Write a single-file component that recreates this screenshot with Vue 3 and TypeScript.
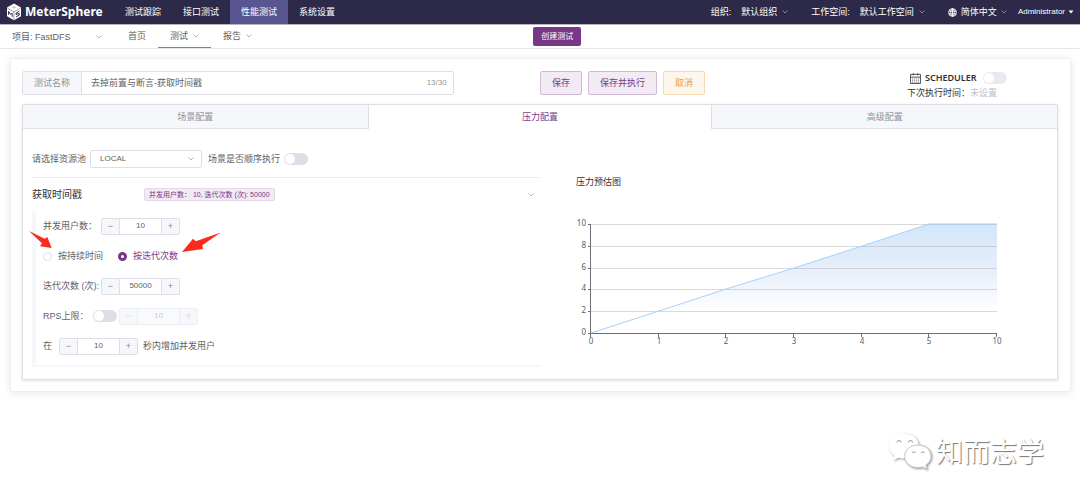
<script setup lang="ts">
import { computed, ref } from 'vue'

const topMenu = ['测试跟踪', '接口测试', '性能测试', '系统设置']
const activeMenu = ref('性能测试')

const tabs = ['场景配置', '压力配置', '高级配置']
const activeTab = ref('压力配置')

const testName = ref('去掉前置与断言-获取时间戳')
const pool = ref('LOCAL')
const serial = ref(false)
const schedule = ref(false)
const rpsEnabled = ref(false)
const mode = ref('iteration')
const threads = ref(10)
const iterations = ref(50000)
const rps = ref(10)
const rampUp = ref(10)

const plot = { left: 15, right: 421, top: 51, bottom: 160 }
const xLabels = ['0', '1', '2', '3', '4', '5', '10']
const values = [0, 2, 4, 6, 8, 10, 10]
const yLabels = [0, 2, 4, 6, 8, 10]

const xAt = (i: number): number =>
  Math.round(plot.left + ((plot.right - plot.left) * i) / (xLabels.length - 1))
const yAt = (v: number): number =>
  Math.round(plot.bottom - ((plot.bottom - plot.top) * v) / 10)

const linePoints = computed(() => values.map((v, i) => `${xAt(i)},${yAt(v)}`).join(' '))
const areaPoints = computed(
  () => `${linePoints.value} ${plot.right},${plot.bottom} ${plot.left},${plot.bottom}`
)
</script>

<template>
  <div class="page">
    <header class="topbar">
      <a class="brand" href="#">
        <svg class="logo" viewBox="0 0 16 18" aria-hidden="true">
          <path d="M8 .6 15 4.6V13.2L8 17.2 1 13.2V4.6Z" fill="#fff" />
          <path d="M1.4 5.2 8 8.9l6.6-3.7M8 8.9v8" fill="none" stroke="#77758c" stroke-width=".7" />
          <path d="M5.6 4.3 8 3l2.5 1.3L8 5.8Z" fill="#c9c8d4" />
          <path d="M2.6 11.8V8.4l1.8 2.8 1.8-.8v3.4" fill="none" stroke="#2c2a48" stroke-width="1" />
          <path d="m13.2 8.4-3 1.6v1.6l3-1.2v1.8l-3 1.6" fill="none" stroke="#2c2a48" stroke-width="1" />
        </svg>
        <span>MeterSphere</span>
      </a>
      <nav class="menu">
        <a
          v-for="item in topMenu"
          :key="item"
          href="#"
          :class="{ active: item === activeMenu }"
          @click.prevent="activeMenu = item"
          >{{ item }}</a
        >
      </nav>
      <div class="tools">
        <span class="tool-label">组织:</span>
        <button class="drop org" type="button">
          默认组织<svg class="chev" viewBox="0 0 6 4"><path d="m.5.5 2.5 2.5L5.5.5" /></svg>
        </button>
        <span class="tool-label">工作空间:</span>
        <button class="drop space" type="button">
          默认工作空间<svg class="chev" viewBox="0 0 6 4"><path d="m.5.5 2.5 2.5L5.5.5" /></svg>
        </button>
        <button class="drop lang" type="button">
          <svg class="globe" viewBox="0 0 10 10" aria-hidden="true">
            <circle cx="5" cy="5" r="4.3" />
            <ellipse cx="5" cy="5" rx="2" ry="4.3" />
            <path d="M.7 3.5h8.6M.7 6.5h8.6M5 .7v8.6" />
          </svg>
          简体中文<svg class="chev" viewBox="0 0 6 4"><path d="m.5.5 2.5 2.5L5.5.5" /></svg>
        </button>
        <button class="drop user" type="button">
          Administrator<svg class="caret" viewBox="0 0 6 4"><path d="M.5.5h5L3 3.6Z" /></svg>
        </button>
      </div>
    </header>

    <div class="subbar">
      <nav class="subnav">
        <button class="project" type="button">
          <span>项目: FastDFS</span>
          <svg class="chev" viewBox="0 0 6 4"><path d="m.5.5 2.5 2.5L5.5.5" /></svg>
        </button>
        <a href="#">首页</a>
        <a class="current" href="#">
          测试<svg class="chev" viewBox="0 0 6 4"><path d="m.5.5 2.5 2.5L5.5.5" /></svg>
        </a>
        <a href="#">
          报告<svg class="chev" viewBox="0 0 6 4"><path d="m.5.5 2.5 2.5L5.5.5" /></svg>
        </a>
      </nav>
      <button class="create" type="button">创建测试</button>
    </div>

    <main class="card">
      <div class="form-head">
        <div class="name-group">
          <label for="test-name">测试名称</label>
          <input id="test-name" v-model="testName" type="text" maxlength="30" />
          <span class="count">13/30</span>
        </div>
        <div class="actions">
          <button class="btn" type="button">保存</button>
          <button class="btn" type="button">保存并执行</button>
          <button class="btn warn" type="button">取消</button>
        </div>
        <div class="scheduler">
          <div class="sched-line">
            <svg class="calendar" viewBox="0 0 12 12" aria-hidden="true">
              <path d="M.5 1.5h11v10H.5ZM.5 4.5h11" />
              <path d="M3.5 0v2.5M8.5 0v2.5" />
              <path d="M2 6.5h8M2 8.5h8M2 10.2h8" stroke-dasharray="1.4 .8" stroke-opacity=".7" />
            </svg>
            <label for="schedule">SCHEDULER</label>
            <input id="schedule" v-model="schedule" class="switch pale" type="checkbox" role="switch" />
          </div>
          <div class="next-run">下次执行时间：<span>未设置</span></div>
        </div>
      </div>

      <section class="tab-box">
        <div class="tabs" role="tablist">
          <button
            v-for="tab in tabs"
            :key="tab"
            type="button"
            role="tab"
            :aria-selected="tab === activeTab"
            :class="{ active: tab === activeTab }"
            @click="activeTab = tab"
          >
            {{ tab }}
          </button>
        </div>

        <div class="panel">
          <div class="config">
            <div class="pool-row">
              <label for="pool">请选择资源池</label>
              <div class="select">
                <select id="pool" v-model="pool">
                  <option>LOCAL</option>
                </select>
                <svg class="chev" viewBox="0 0 6 4"><path d="m.5.5 2.5 2.5L5.5.5" /></svg>
              </div>
              <label for="serial">场景是否顺序执行</label>
              <input id="serial" v-model="serial" class="switch" type="checkbox" role="switch" />
            </div>

            <button class="group-head" type="button" aria-expanded="true">
              <span class="group-title">获取时间戳</span>
              <span class="tag">并发用户数： 10, 迭代次数 (次): 50000</span>
              <svg class="chev" viewBox="0 0 6 4"><path d="m.5.5 2.5 2.5L5.5.5" /></svg>
            </button>

            <div class="group-body">
              <div class="row">
                <label class="wide" for="threads">并发用户数：</label>
                <div class="stepper">
                  <button type="button" aria-label="减少并发用户数" @click="threads--">−</button>
                  <input id="threads" v-model.number="threads" type="text" />
                  <button type="button" aria-label="增加并发用户数" @click="threads++">+</button>
                </div>
              </div>
              <div class="row">
                <label class="radio">
                  <input v-model="mode" type="radio" name="mode" value="duration" />按持续时间
                </label>
                <label class="radio" :class="{ chosen: mode === 'iteration' }">
                  <input v-model="mode" type="radio" name="mode" value="iteration" />按迭代次数
                </label>
              </div>
              <div class="row">
                <label class="wide" for="iterations">迭代次数 (次):</label>
                <div class="stepper">
                  <button type="button" aria-label="减少迭代次数" @click="iterations--">−</button>
                  <input id="iterations" v-model.number="iterations" type="text" />
                  <button type="button" aria-label="增加迭代次数" @click="iterations++">+</button>
                </div>
              </div>
              <div class="row">
                <label class="medium" for="rps-on">RPS上限：</label>
                <input id="rps-on" v-model="rpsEnabled" class="switch" type="checkbox" role="switch" />
                <div class="stepper after-switch" :class="{ disabled: !rpsEnabled }">
                  <button type="button" aria-label="减少RPS" :disabled="!rpsEnabled" @click="rps--">−</button>
                  <input v-model.number="rps" type="text" aria-label="RPS上限" :disabled="!rpsEnabled" />
                  <button type="button" aria-label="增加RPS" :disabled="!rpsEnabled" @click="rps++">+</button>
                </div>
              </div>
              <div class="row">
                <label class="narrow" for="ramp">在</label>
                <div class="stepper">
                  <button type="button" aria-label="减少秒数" @click="rampUp--">−</button>
                  <input id="ramp" v-model.number="rampUp" type="text" />
                  <button type="button" aria-label="增加秒数" @click="rampUp++">+</button>
                </div>
                <span class="suffix">秒内增加并发用户</span>
              </div>
              <svg class="pointers" viewBox="0 0 196 28" aria-hidden="true">
                <path d="M1 2 16.7 9.7 19.3 8 23.7 19 12 17.3 14 14.3Z" />
                <path d="M192.7 3.5 174.3 16.3 175 20 154 23 165 9.7 167.7 12.3Z" />
              </svg>
            </div>
          </div>

          <div class="estimate">
            <h2>压力预估图</h2>
            <svg class="chart" viewBox="0 24 472 160" role="img" aria-label="压力预估图">
              <defs>
                <linearGradient id="load-fill" x1="0" y1="0" x2="0" y2="1">
                  <stop offset="0" stop-color="#d3e5f8" />
                  <stop offset=".45" stop-color="#e8f0fc" />
                  <stop offset=".8" stop-color="#fff" />
                </linearGradient>
              </defs>
              <polygon :points="areaPoints" fill="url(#load-fill)" />
              <g class="y-axis">
                <g v-for="v in yLabels" :key="v">
                  <path v-if="v > 0" class="grid-line" :d="`M${plot.left} ${yAt(v) + 0.5}H${plot.right}`" />
                  <path class="axis" :d="`M${plot.left - 3} ${yAt(v) + 0.5}h3`" />
                  <text :x="plot.left - 5" :y="yAt(v) + 2" text-anchor="end">{{ v }}</text>
                </g>
              </g>
              <path
                class="axis"
                :d="`M${plot.left - 0.5} ${plot.top}V${plot.bottom}M${plot.left} ${plot.bottom + 0.5}H${plot.right}`"
              />
              <g v-for="(label, i) in xLabels" :key="label">
                <path class="axis" :d="`M${xAt(i) - 0.5} ${plot.bottom}v4`" />
                <text :x="xAt(i)" :y="plot.bottom + 11" text-anchor="middle">{{ label }}</text>
              </g>
              <polyline :points="linePoints" class="line" />
            </svg>
          </div>
        </div>
      </section>
    </main>

    <div class="watermark">
      <svg viewBox="0 0 44 38" aria-hidden="true">
        <path
          d="M16 1.5C7.500 1.500 1 7 1 14c0 4 2.200 7.600 5.700 10L5.200 28.500 10.500 25.800c1.800.5 3.600.8 5.500.8 8.300 0 15-5.500 15-12.600S24.300 1.500 16 1.500Z"
        />
        <path
          class="front"
          d="M30 13c-7.500 0-13.300 5-13.300 11.300S22.500 35.600 30 35.600c1.600 0 3.200-.3 4.600-.7l4.400 2.300-1.200-4c3.100-2.100 5.200-5.200 5.200-8.900C43 18 37.500 13 30 13Z"
        />
        <path class="eye" d="M9 10.500a2 2 0 0 1 4 0M20.500 10.500a2 2 0 0 1 4 0M24 21a2 2 0 0 1 3.600 0M33 21a2 2 0 0 1 3.600 0" />
      </svg>
      <span>知而志学</span>
    </div>
  </div>
</template>

<style>
body {
  background: #fff;
}
</style>

<style scoped>
.page {
  position: relative;
  min-height: 100vh;
  box-sizing: border-box;
  font-family: 'Liberation Sans', 'Noto Sans CJK SC', sans-serif;
  font-size: 9px;
  line-height: 12px;
  color: #606266;
}
.page *,
.page *::before {
  box-sizing: border-box;
}
button,
input,
select {
  font: inherit;
  color: inherit;
  margin: 0;
  padding: 0;
  border: 0;
  background: none;
  outline: 0;
  border-radius: 0;
}
button {
  cursor: pointer;
  white-space: nowrap;
}
a {
  color: inherit;
  text-decoration: none;
}
.chev {
  width: 6px;
  height: 4px;
  flex: none;
  fill: none;
  stroke: #b4b7be;
  stroke-width: 1;
}

.topbar {
  display: flex;
  height: 25px;
  background: #2c2a48;
  border-bottom: 1px solid #b5b4c2;
  color: #fff;
}
.brand {
  display: flex;
  align-items: center;
  gap: 3px;
  width: 114px;
  padding-left: 6px;
  font-family: 'Noto Sans', sans-serif;
  font-weight: 700;
  font-size: 12px;
}
.logo {
  width: 16px;
  height: 18px;
}
.menu {
  display: flex;
}
.menu a {
  display: flex;
  align-items: center;
  padding: 0 11px;
}
.menu a.active {
  background: #595591;
}
.tools {
  display: flex;
  align-items: center;
  margin-left: auto;
  padding-right: 6px;
}
.drop {
  display: flex;
  align-items: center;
  gap: 5px;
}
.drop .chev {
  stroke: #85849a;
}
.tool-label {
  margin-right: 10px;
}
.org,
.space {
  margin-right: 23px;
}
.lang {
  gap: 4px;
  margin-right: 11px;
}
.globe {
  width: 9px;
  height: 9px;
  fill: none;
  stroke: #fff;
  stroke-width: 1;
}
.user {
  font-size: 8px;
  gap: 3px;
}
.caret {
  width: 6px;
  height: 4px;
  fill: #fff;
}

.subbar {
  display: grid;
  grid-template-columns: 39fr 40fr;
  align-items: center;
  height: 24px;
  border-bottom: 1px solid #e6e6ea;
}
.subnav {
  display: flex;
  align-self: stretch;
}
.project {
  display: flex;
  align-items: center;
  justify-content: space-between;
  width: 102px;
  margin-right: 14px;
  padding-left: 12px;
}
.subnav a {
  display: flex;
  align-items: center;
  gap: 5px;
  padding: 0 12px;
  border-bottom: 1px solid transparent;
}
.subnav a.current {
  border-bottom-color: #a06bab;
}
.create {
  justify-self: start;
  height: 19px;
  padding: 0 8px;
  border-radius: 2px;
  background: #783887;
  color: #fff;
  font-size: 8px;
}

.card {
  margin: 9px 9px 0 10px;
  padding: 8px 12px 11px 11px;
  border: 1px solid #ebeef5;
  border-radius: 2px;
  box-shadow: 0 1px 8px rgba(0, 0, 0, 0.1);
}
.form-head {
  display: grid;
  grid-template-columns: 5fr 1fr 3fr 3fr;
  align-items: center;
  height: 32px;
}
.name-group {
  display: flex;
  align-items: center;
  height: 24px;
  border: 1px solid #dcdfe6;
  border-radius: 2px;
}
.name-group label {
  display: flex;
  align-items: center;
  justify-content: center;
  align-self: stretch;
  width: 59px;
  background: #f5f7fa;
  border-right: 1px solid #dcdfe6;
  color: #909399;
}
.name-group input {
  flex: 1;
  min-width: 0;
  padding-left: 9px;
}
.count {
  padding-right: 6px;
  font-size: 8px;
  color: #909399;
}
.actions {
  grid-column: 3;
  display: flex;
  gap: 6px;
}
.btn {
  height: 24px;
  padding: 0 11px;
  border: 1px solid #d0b8d6;
  border-radius: 2px;
  background: #f2ebf3;
  color: #783887;
}
.btn.warn {
  border-color: #f5dab1;
  background: #fdf6ec;
  color: #e6a23c;
}
.scheduler {
  justify-self: end;
  width: 151px;
  padding-top: 2px;
}
.sched-line {
  display: flex;
  align-items: center;
  height: 18px;
  padding-left: 3px;
  color: #303133;
}
.sched-line label {
  margin: 0 6px 0 4px;
  font-family: 'Noto Sans', sans-serif;
  font-weight: 600;
}
.calendar {
  width: 11px;
  height: 11px;
  fill: none;
  stroke: #44464c;
  stroke-width: 1;
}
.next-run {
  color: #303133;
}
.next-run span {
  color: #c0c0c4;
}
.switch {
  appearance: none;
  flex: none;
  display: flex;
  align-items: center;
  width: 24px;
  height: 12px;
  padding: 1px;
  border-radius: 6px;
  background: #dcdfe6;
  cursor: pointer;
}
.switch::before {
  content: '';
  width: 10px;
  height: 10px;
  border-radius: 50%;
  background: #fff;
}
.switch:checked {
  justify-content: flex-end;
  background: #783887;
}
.switch.pale {
  background: #e9eaef;
}

.tab-box {
  margin-top: 5px;
  border: 1px solid #dcdfe6;
  box-shadow: 0 1px 3px rgba(0, 0, 0, 0.12);
}
.tabs {
  display: grid;
  grid-template-columns: repeat(3, 1fr);
  height: 24px;
}
.tabs button {
  background: #f5f7fa;
  border-bottom: 1px solid #dcdfe6;
  color: #909399;
}
.tabs button.active {
  background: #fff;
  border: 1px solid #dcdfe6;
  border-width: 0 1px;
  color: #783887;
}
.panel {
  display: grid;
  grid-template-columns: 1fr 1fr;
  padding: 20px 9px 12px;
}
.pool-row {
  display: flex;
  align-items: center;
  height: 29px;
  padding-bottom: 8px;
  border-bottom: 1px solid #ebeef5;
}
.select {
  display: flex;
  align-items: center;
  width: 112px;
  height: 18px;
  margin: 0 6px 0 4px;
  padding-right: 7px;
  border: 1px solid #dcdfe6;
  border-radius: 2px;
}
.select select {
  appearance: none;
  flex: 1;
  padding-left: 9px;
  font-size: 8px;
}
.pool-row .switch {
  margin-left: 4px;
}
.group-head {
  display: flex;
  align-items: center;
  width: 100%;
  height: 33px;
  padding-right: 6px;
  text-align: left;
}
.group-title {
  width: 112px;
  font-size: 10px;
  color: #303133;
}
.tag {
  padding: 0 4px;
  border: 1px solid #e4d7e7;
  border-radius: 2px;
  background: #f2ebf3;
  color: #783887;
  font-size: 7px;
  line-height: 11px;
}
.group-head .chev {
  margin-left: auto;
}
.group-body {
  position: relative;
  border-left: 4px solid #f5f7fa;
  border-bottom: 2px solid #f5f7fa;
  padding: 0 0 4px 7px;
}
.row {
  display: flex;
  align-items: center;
  height: 30px;
}
.wide {
  width: 58px;
}
.medium {
  width: 50px;
}
.narrow {
  width: 16px;
}
.suffix {
  margin-left: 5px;
}
.stepper {
  display: grid;
  grid-template-columns: 17px 43px 17px;
  height: 17px;
  border: 1px solid #dcdfe6;
  border-radius: 2px;
}
.stepper button {
  background: #f5f7fa;
  color: #85888e;
  line-height: 15px;
}
.stepper input {
  width: 100%;
  min-width: 0;
  border: 1px solid #dcdfe6;
  border-width: 0 1px;
  text-align: center;
  font-size: 8px;
}
.stepper.disabled {
  border-color: #ebeef5;
  color: #c8cbd2;
}
.stepper.disabled button {
  color: #d4d7de;
}
.stepper.disabled input {
  border-color: #ebeef5;
  background: #f9fafc;
}
.after-switch {
  margin-left: 2px;
}
.radio {
  display: flex;
  align-items: center;
  gap: 6px;
  margin-right: 15px;
}
.radio input {
  appearance: none;
  width: 9px;
  height: 9px;
  border: 1px solid #dcdfe6;
  border-radius: 50%;
  background: #fff;
}
.radio input:checked {
  border: 3px solid #783887;
}
.chosen {
  color: #783887;
}
.pointers {
  position: absolute;
  left: -8px;
  top: 18px;
  width: 196px;
  height: 28px;
  fill: #fb2a1c;
  pointer-events: none;
}

.estimate {
  padding: 26px 0 0 36px;
}
.estimate h2 {
  margin: 0;
  font-size: 9px;
  font-weight: 400;
  line-height: 14px;
  color: #303133;
}
.chart {
  display: block;
  width: 100%;
  margin-top: 8px;
}
.chart text {
  font-family: 'Noto Sans', sans-serif;
  font-size: 8px;
  fill: #5c5e63;
}
.grid-line {
  stroke: #b4b4b4;
  stroke-opacity: 0.5;
}
.axis {
  fill: none;
  stroke: #6e7079;
}
.line {
  fill: none;
  stroke: #a5d2fb;
  stroke-width: 1;
}

.watermark {
  position: absolute;
  right: 36px;
  bottom: 30px;
  display: flex;
  align-items: center;
  gap: 4px;
  font-family: 'Noto Sans CJK SC', sans-serif;
  font-size: 27px;
  line-height: 38px;
  color: #fff;
  text-shadow: 1px 1px 1px #777;
}
.watermark svg {
  width: 44px;
  height: 38px;
  fill: #fff;
  filter: drop-shadow(1px 1px 1px #999);
}
.watermark .front {
  stroke: #c4c4c4;
  stroke-width: 1;
}
.watermark .eye {
  fill: none;
  stroke: #999;
  stroke-width: 1;
}
</style>
